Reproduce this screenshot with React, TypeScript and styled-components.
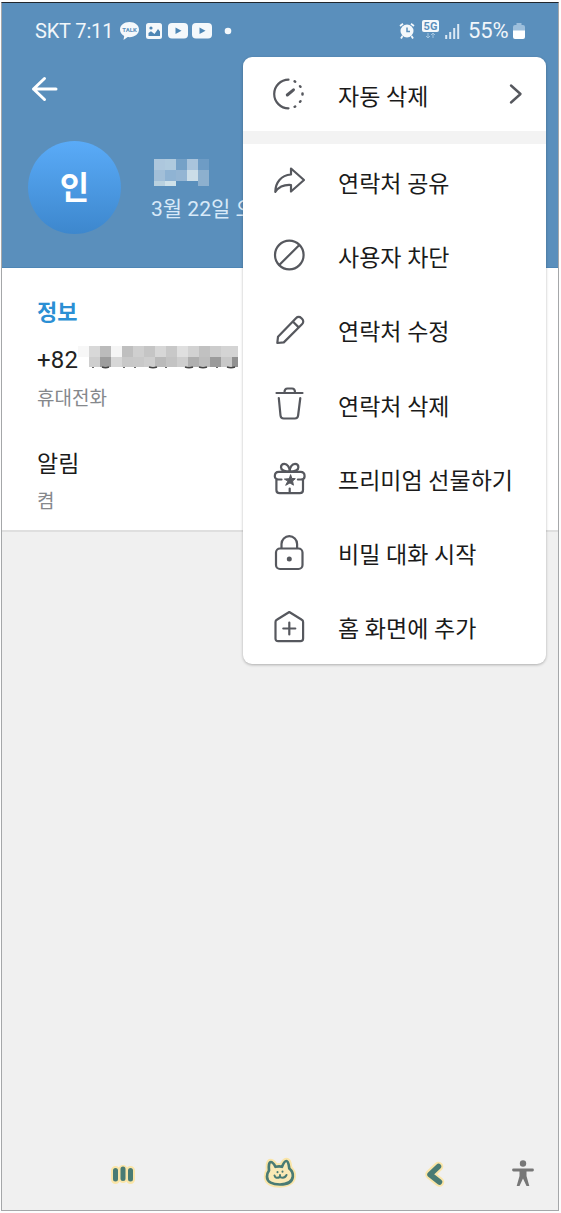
import React from "react";
import styled, { createGlobalStyle } from "styled-components";

const GlobalStyle = createGlobalStyle`
  * { box-sizing: border-box; }
  body {
    margin: 0;
    background: #fff;
    font-family: Roboto, "Noto Sans CJK KR", sans-serif;
  }
`;

const Page = styled.main`
  width: 561px;
  height: 1213px;
  padding: 2px 2px 2px 1px;
  overflow: hidden;
  background: #fdfdfd;
`;

const Screen = styled.div`
  position: relative;
  display: flex;
  flex-direction: column;
  width: 558px;
  height: 1209px;
  border: 1px solid #a5a7a9;
  border-top-color: #20262c;
  background: #f0f0f0;
`;

const Header = styled.header`
  height: 265px;
  background: #5a8fbc;
  border-bottom: 1px solid #4e86b5;
  color: #fff;
`;

const StatusBar = styled.div`
  display: flex;
  justify-content: space-between;
  align-items: center;
  height: 55px;
  padding: 0 33px 0 33px;
  color: #f1f6fa;
`;

const StatusGroup = styled.div`
  display: flex;
  align-items: center;
`;

const Carrier = styled.span`
  width: 78px;
  margin-right: 7px;
  font-size: 20px;
  letter-spacing: -0.15px;
  white-space: nowrap;
`;

const Battery = styled.span`
  width: 43px;
  margin: 0 2px 0 6px;
  font-size: 22px;
  letter-spacing: -0.1px;
`;

const StatusIcon = styled.svg<{ $gap?: number }>`
  display: block;
  flex: none;
  overflow: visible;
  margin-right: ${(p) => p.$gap ?? 0}px;
`;

const Toolbar = styled.div`
  display: flex;
  align-items: center;
  height: 62px;
  padding-left: 29px;
`;

const Profile = styled.div`
  display: flex;
  padding: 21px 0 0 26px;
`;

const Avatar = styled.div`
  display: flex;
  align-items: center;
  justify-content: center;
  width: 93px;
  height: 93px;
  border-radius: 50%;
  background: linear-gradient(#5aabf8, #3d87cd);
  font-size: 32px;
  font-weight: 700;
  line-height: 1;
`;

const ProfileText = styled.div`
  display: flex;
  flex-direction: column;
  padding: 18px 0 0 30px;
`;

const LastSeen = styled.span`
  margin-top: 8px;
  font-size: 21px;
  line-height: 30px;
  color: #d8e9f8;
  white-space: nowrap;
`;

const Mosaic = styled.div<{ $columns: string; $rows: string; $offset?: number }>`
  display: grid;
  grid-template-columns: ${(p) => p.$columns};
  grid-template-rows: ${(p) => p.$rows};
  margin-left: ${(p) => p.$offset ?? 0}px;
`;

const Cell = styled.i<{ $color: string }>`
  background: ${(p) => p.$color};
`;

const Info = styled.section`
  height: 264px;
  padding: 29px 0 0 35px;
  background: #fff;
  border-bottom: 2px solid #dfdfdf;
`;

const InfoTitle = styled.h2`
  margin: 0;
  font-size: 22px;
  line-height: 32px;
  font-weight: 700;
  color: #2b8fd4;
`;

const Phone = styled.div`
  display: flex;
  height: 32px;
  margin-top: 15px;
  font-size: 24px;
  line-height: 33px;
  color: #222;
`;

const PhonePrefix = styled.span`
  width: 41px;
  letter-spacing: 0.2px;
`;

const Hidden = styled.div`
  padding-top: 2px;
`;

const Caption = styled.div`
  height: 28px;
  margin-top: 9px;
  font-size: 19px;
  line-height: 28px;
  color: #85888c;
`;

const Setting = styled.div`
  height: 34px;
  margin-top: 35px;
  font-size: 23px;
  font-weight: 400;
  line-height: 34px;
  color: #1a1a1a;
`;

const SmallCaption = styled(Caption)`
  margin-top: 6px;
`;

const Menu = styled.nav`
  position: absolute;
  left: 241px;
  top: 54px;
  width: 303px;
  height: 607px;
  overflow: hidden;
  border-radius: 9px;
  background: #fff;
  box-shadow: 0 1px 3px rgba(0, 0, 0, 0.28);
`;

const MenuItem = styled.div<{ $height?: number }>`
  display: flex;
  align-items: center;
  height: ${(p) => p.$height ?? 74.3}px;
  padding: 0 23px 0 29px;
  color: #1a1a1a;
`;

const MenuIcon = styled.svg`
  flex: none;
  width: 34px;
  height: 34px;
  overflow: visible;
  margin-right: 32px;
  fill: none;
  stroke: #56585e;
  stroke-width: 2.2;
  stroke-linecap: round;
  stroke-linejoin: round;
`;

const MenuLabel = styled.span`
  flex: 1;
  padding-top: 7px;
  font-size: 23px;
  font-weight: 400;
  line-height: 32px;
  white-space: nowrap;
`;

const Separator = styled.div`
  height: 13px;
  background: #f3f3f3;
`;

const NavBar = styled.footer`
  display: flex;
  align-items: center;
  height: 73px;
  margin-top: auto;
  padding-left: 106px;
`;

const NavIcon = styled.svg<{ $gap?: number }>`
  flex: none;
  overflow: visible;
  margin-right: ${(p) => p.$gap ?? 0}px;
  stroke-linecap: round;
  stroke-linejoin: round;
`;

const nameCells = [
  "#adc7dd", "#afcade", "#75a1c7", "#a9c4dc", "#6e9cc5",
  "#a2bfd8", "#8fb3d3", "#94b5d3", "#cbdde8", "#8db0ce",
  "#b9d1df", "#cfe1e9", "#5a8fbc", "#5a8fbc", "#8db0ce",
];

const phoneCells = [
  "#f7f7f7", "#d8d8d8", "#bbbbbb", "#f5f5f5", "#bfbfbf", "#cfcfcf", "#c5c5c5", "#d7d7d7",
  "#c8c8c8", "#dfdfdf", "#d2d2d2", "#c1c1c1", "#cccccc", "#d4d4d4", "#d4d4d4",
  "#ffffff", "#cecece", "#9d9d9d", "#d7d7d7", "#c8c8c8", "#c9c9c9", "#cecece", "#bababa",
  "#c3c3c3", "#cecece", "#afafaf", "#bdbdbd", "#9b9b9b", "#c8c8c8", "#cccccc",
];
const lastPhoneCell = "#919191";

const catFace =
  "M5 11.500C4.500 7 5 3 6.800 3c2 0 3.500 2.500 4.700 4.800q4-1 6.500 0C19.300 4.500 20.500 2 22.300 2c2.200 0 2.500 4.500 3 7.500 2.700 2.300 4 4.500 3.500 8.300-.7 5-5.800 7.700-12.800 7.700C8.500 25.500 3 23 3 17.800c0-2.800.5-4.300 2-6.300Z";

const menuItems: { label: string; icon: React.ReactNode }[] = [
  {
    label: "연락처 공유",
    icon: <path d="M19 4.500 32 16 19 27.500V21C12 20.500 7.500 22 3.300 27.800 3.500 18.500 9 11.300 19 10.500Z" />,
  },
  {
    label: "사용자 차단",
    icon: (
      <>
        <circle cx="17.300" cy="17" r="14.300" />
        <path d="M7.500 26.800 27.100 7.200" />
      </>
    ),
  },
  {
    label: "연락처 수정",
    icon: (
      <path d="M5.300 30 6 23.800 24.200 5a3.500 3.500 0 0 1 5 0l1 1a3.500 3.500 0 0 1 0 5L11.800 29.400ZM20.800 8.500l5.900 5.900" />
    ),
  },
  {
    label: "연락처 삭제",
    icon: (
      <>
        <path d="M4.500 6H30.500M12.500 5.500c0-3 1-4 3-4h4.500c2 0 3 1 3 4" />
        <path d="M6.800 11 8.500 28.500c.2 2 1.300 3 3.200 3h11.200c1.900 0 3-1 3.200-3L28.300 11" />
      </>
    ),
  },
  {
    label: "프리미엄 선물하기",
    icon: (
      <>
        <path d="M9.500 18.500H6.500c-2 0-3.700-1.200-3.700-3.300 0-2.700 1.400-4.400 4-4.400h21.800c2.600 0 4 1.700 4 4.400 0 2.100-1.700 3.300-3.700 3.300h-3M4.400 19v10c0 2 1.200 3.200 3.200 3.200h20.200c2 0 3.200-1.200 3.200-3.200V19M17.700 27.500v4.500" />
        <path d="M17.700 10.500c-4 0-8.700-1-8.700-4.200 0-2.200 1.400-3.500 3.400-3.500 3 0 5.300 3.500 5.300 7.700 0-4.200 2.300-7.700 5.300-7.700 2 0 3.400 1.300 3.400 3.500 0 3.200-4.700 4.200-8.700 4.200Z" />
        <path fill="#56585e" strokeWidth="1" d="m18.700 14 1.100 3.400 3.500.3-2.700 2.300.8 4.200-3.400-2.300-4.300 2.400 2.200-4.200-3.500-2 4.600-.4Z" />
      </>
    ),
  },
  {
    label: "비밀 대화 시작",
    icon: (
      <>
        <rect x="4" y="12.500" width="26.500" height="20.500" rx="4" />
        <path d="M9.500 12V8a7.800 7.800 0 0 1 15.600 0V12" />
        <circle cx="17.300" cy="23" r="1.400" fill="#56585e" />
      </>
    ),
  },
  {
    label: "홈 화면에 추가",
    icon: (
      <>
        <path d="M17.300 2 29.800 9.700c.9.500 1.300 1.300 1.300 2.300v16.500c0 1.800-.9 2.700-2.700 2.700H6.200c-1.800 0-2.700-.9-2.700-2.700V12c0-1 .4-1.800 1.300-2.300Z" />
        <path d="M17.300 12.500v12M11.300 18.500h12" />
      </>
    ),
  },
];

const VideoIcon = ({ gap }: { gap: number }) => (
  <StatusIcon width="20" height="16" $gap={gap}>
    <rect width="20" height="15.500" rx="4" fill="#f4f8fb" />
    <path d="m7.500 4.500 6 3.300-6 3.300Z" fill="#4d86b5" />
  </StatusIcon>
);

export default function App() {
  return (
    <Page>
      <GlobalStyle />
      <Screen>
        <Header>
          <StatusBar>
            <StatusGroup>
              <Carrier>SKT 7:11</Carrier>
              <StatusIcon width="19" height="18" $gap={7}>
                <path d="M9.500 0C4 0 0 3.300 0 7.600c0 2.700 1.600 5 4.200 6.300L3.500 18l4.200-2.900c6.400.8 11.300-2.700 11.300-7.500C19 3.300 15 0 9.500 0Z" fill="#f4f8fb" />
                <text x="9.500" y="10" textAnchor="middle" fontSize="6" fontWeight="700" fill="#5a8fbc">TALK</text>
              </StatusIcon>
              <StatusIcon width="16" height="16" $gap={6}>
                <rect width="16" height="16" rx="2.500" fill="#f4f8fb" />
                <circle cx="5" cy="5" r="1.600" fill="#4d86b5" />
                <path d="M2.500 13V10l2.500-1.800L8.500 11l3.500-5 2 2.500V13Z" fill="#4d86b5" />
              </StatusIcon>
              <VideoIcon gap={4} />
              <VideoIcon gap={13} />
              <StatusIcon width="6" height="6">
                <circle cx="3" cy="3" r="3.300" fill="#f4f8fb" />
              </StatusIcon>
            </StatusGroup>
            <StatusGroup>
              <StatusIcon width="16" height="16" $gap={7}>
                <path d="m1 3 3-2.200M15 3l-3-2.200M3.500 13 2 15.500m10.500-2.500 1.500 2.500" stroke="#f4f8fb" strokeWidth="1.800" />
                <circle cx="8" cy="8" r="6.500" fill="#f4f8fb" />
                <path d="M8 4.500V8.500h3" stroke="#5a8fbc" strokeWidth="1.500" fill="none" />
              </StatusIcon>
              <StatusIcon width="17" height="20" $gap={6}>
                <rect y="-1" width="17" height="12" rx="2" fill="#f4f8fb" />
                <text x="8.500" y="9" textAnchor="middle" fontSize="11" fontWeight="700" fill="#5a8fbc">5G</text>
                <path d="M6 12v5m-2-2 2 2 2-2M11 17v-5m-2 2 2-2 2 2" stroke="#a2c4df" fill="none" />
              </StatusIcon>
              <StatusIcon width="15" height="16" $gap={2}>
                <path d="M1.200 12v4M5.200 9v7M9.200 5v11M13.200 1v15" stroke="#dce9f4" strokeWidth="2" />
              </StatusIcon>
              <Battery>55%</Battery>
              <StatusIcon width="12" height="16">
                <path d="M3.500 0h5v2H10q2 0 2 2v4H0V4q0-2 2-2h1.500Z" fill="#9dbfdc" />
                <path d="M0 7.500h12V14q0 2-2 2H2q-2 0-2-2Z" fill="#fff" />
              </StatusIcon>
            </StatusGroup>
          </StatusBar>
          <Toolbar>
            <StatusIcon width="26" height="24">
              <path d="M13.500 1.500 2.500 12l11 10.500M2.500 12H25" fill="none" stroke="#fff" strokeWidth="3" strokeLinecap="round" strokeLinejoin="round" />
            </StatusIcon>
          </Toolbar>
          <Profile>
            <Avatar>인</Avatar>
            <ProfileText>
              <Mosaic $columns="repeat(5, 11px)" $rows="11px 11px 5px" $offset={3}>
                {nameCells.map((color, i) => <Cell key={i} $color={color} />)}
              </Mosaic>
              <LastSeen>3월 22일 오</LastSeen>
            </ProfileText>
          </Profile>
        </Header>
        <Info>
          <InfoTitle>정보</InfoTitle>
          <Phone>
            <PhonePrefix>+82</PhonePrefix>
            <Hidden>
              <Mosaic $columns="repeat(14, 11px) 6px" $rows="11px 10px">
                {phoneCells.map((color, i) => (
                  <Cell key={i} $color={i === phoneCells.length - 1 ? lastPhoneCell : color} />
                ))}
              </Mosaic>
              <StatusIcon width="160" height="3">
                <path d="M15 0v1M24 0q3.500 1.500 7 0M46 0v1M57 0v1M71 0q4 1.500 8 0M88 0v1M107 0q4 1.500 8 0M121 0q4 1.500 8 0M139 0v1M149 0q4 1.500 8 0" fill="none" stroke="#444" strokeWidth="1.600" />
              </StatusIcon>
            </Hidden>
          </Phone>
          <Caption>휴대전화</Caption>
          <Setting>알림</Setting>
          <SmallCaption>켬</SmallCaption>
        </Info>
        <NavBar>
          <NavIcon width="30" height="30" viewBox="0 0 30 30" $gap={126}>
            <path d="M7.500 11.500v9M15 10.500v9M22.500 11.500v9" stroke="#fae5a8" strokeWidth="9" />
            <path d="M7.500 11.500v8.500M15 10v9.500M22.500 11.500v8.500" stroke="#497b74" strokeWidth="5" />
          </NavIcon>
          <NavIcon width="32" height="30" viewBox="0 0 32 30" $gap={129}>
            <path d={catFace} fill="#fae9b5" stroke="#fae5a8" strokeWidth="6.500" />
            <path d={catFace} fill="#fae9b5" stroke="#497b74" strokeWidth="2.700" />
            <path d="M10.500 16.500q1 3.800 5.500 1.500 4.500 2 6.500-2M13.500 13v.2M18.500 12.500v.2M16 16v1.500" fill="none" stroke="#497b74" strokeWidth="2" />
          </NavIcon>
          <NavIcon width="20" height="26" viewBox="0 0 20 26" $gap={67}>
            <path d="M13.500 5.500 5 13.500l9.500 7.500" fill="none" stroke="#fae5a8" strokeWidth="9.500" />
            <path d="M13.500 5.500 5 13.500l9.500 7.500" fill="none" stroke="#497b74" strokeWidth="5.500" />
          </NavIcon>
          <NavIcon width="22" height="27" viewBox="0 0 22 27">
            <circle cx="11" cy="3.500" r="3.200" fill="#777" />
            <path d="M1.500 10h19" stroke="#777" strokeWidth="2.800" fill="none" />
            <path d="M7.500 10h7v6l2.800 10h-2.800L11 18.500 7.500 26H4.700l2.800-10Z" fill="#777" />
          </NavIcon>
        </NavBar>
        <Menu>
          <MenuItem $height={74}>
            <MenuIcon>
              <path d="M16.500 2.700a14.300 14.300 0 0 0 0 28.600" />
              <path d="M22.600 4.300l.6.300M28 9.200l.5.600M30.500 16.500v1M28.500 24.200l-.5.600M23.200 29.500l-.6.300" strokeWidth="2.500" />
              <path d="M15.300 18 21.500 12.800" strokeWidth="3" />
            </MenuIcon>
            <MenuLabel>자동 삭제</MenuLabel>
            <StatusIcon width="14" height="20">
              <path d="m2 1.500 9.500 8.500L2 18.500" fill="none" stroke="#56585e" strokeWidth="2.400" strokeLinecap="round" strokeLinejoin="round" />
            </StatusIcon>
          </MenuItem>
          <Separator />
          {menuItems.map((item) => (
            <MenuItem key={item.label}>
              <MenuIcon>{item.icon}</MenuIcon>
              <MenuLabel>{item.label}</MenuLabel>
            </MenuItem>
          ))}
        </Menu>
      </Screen>
    </Page>
  );
}
